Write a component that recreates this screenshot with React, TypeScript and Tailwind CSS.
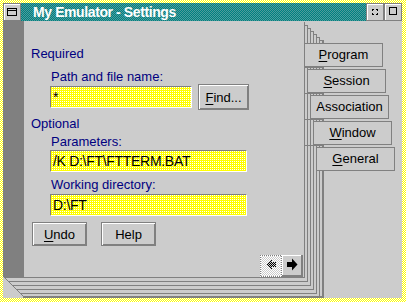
import React from "react";

const GRAY = "#808080";

function Mn({ c }: { c: string }) {
  return <span className="underline underline-offset-2">{c}</span>;
}

function PushButton({ children, className }: { children: React.ReactNode; className: string }) {
  return (
    <div
      className={`flex items-center justify-center border border-[#808080] bg-[#cccccc] text-[13px] text-black shadow-[inset_1px_1px_0_#ffffff,inset_-1px_-1px_0_#808080] ${className}`}
    >
      {children}
    </div>
  );
}

function Field({ value, w }: { value: string; w: string }) {
  return (
    <div
      className={`flex h-[22px] items-center border border-t-[#808080] border-l-[#808080] border-r-white border-b-white bg-[image:conic-gradient(#ffffff_0_25%,#ffff00_0)] bg-[length:2px_2px] pl-[2px] text-[14px] tracking-[-0.3px] text-black ${w}`}
    >
      {value}
    </div>
  );
}

function TitleButton({ kind }: { kind: "hide" | "max" }) {
  return (
    <div className="flex h-[18px] w-[18px] items-center justify-center border border-[#808080] bg-[#cccccc] shadow-[inset_1px_1px_0_#ffffff]">
      <svg width="16" height="16" shapeRendering="crispEdges">
        {kind === "hide" ? (
          <g fill="#000">
            <rect x="5" y="5" width="2" height="1" />
            <rect x="5" y="5" width="1" height="2" />
            <rect x="9" y="5" width="2" height="1" />
            <rect x="10" y="5" width="1" height="2" />
            <rect x="5" y="10" width="2" height="1" />
            <rect x="5" y="9" width="1" height="2" />
            <rect x="9" y="10" width="2" height="1" />
            <rect x="10" y="9" width="1" height="2" />
          </g>
        ) : (
          <rect x="4.5" y="3.5" width="7" height="7" fill="none" stroke="#000" strokeWidth="1.4" />
        )}
      </svg>
    </div>
  );
}

function Edges() {
  const r: React.ReactNode[] = [];
  const bottoms = [277, 281, 285, 289, 293, 296];
  for (let i = 0; i < 6; i++) {
    const x = 304 + 3 * i;
    const top = 22 + 3 * i;
    r.push(<rect key={"v" + i} x={x} y={top} width={1} height={bottoms[i] - top + 1} />);
    if (i > 0) r.push(<rect key={"s" + i} x={x - 3} y={top} width={3} height={1} />);
    if (i < 5) {
      const hx = 4 + 4 * i;
      r.push(<rect key={"h" + i} x={hx} y={bottoms[i]} width={x + 1 - hx} height={1} />);
    }
  }
  [67, 93, 119, 145].forEach((y) => r.push(<rect key={"g" + y} x={304} y={y} width={20} height={1} />));
  return (
    <svg className="absolute left-0 top-0" width="399" height="277" shapeRendering="crispEdges">
      <g transform="translate(-3 -21)" fill={GRAY}>
        {r}
        <rect x="319" y="40" width="3" height="1" />
        <rect x="322" y="40" width="2" height="258" />
        <rect x="23" y="296" width="301" height="2" />
        <line x1="4" y1="277" x2="24" y2="297" stroke={GRAY} strokeWidth="1" shapeRendering="auto" />
      </g>
    </svg>
  );
}

function BackArrow() {
  return (
    <svg width="22" height="22" shapeRendering="crispEdges">
      <defs>
        <pattern id="lite" width="2" height="2" patternUnits="userSpaceOnUse">
          <rect width="2" height="2" fill="#cccccc" />
          <rect width="1" height="1" fill="#ffffff" />
          <rect x="1" y="1" width="1" height="1" fill="#ffffff" />
        </pattern>
        <pattern id="dark" width="2" height="2" patternUnits="userSpaceOnUse">
          <rect width="1" height="1" fill="#000" />
          <rect x="1" y="1" width="1" height="1" fill="#000" />
        </pattern>
        <pattern id="edge" width="2" height="2" patternUnits="userSpaceOnUse">
          <rect width="2" height="2" fill="#ffffff" />
          <rect width="1" height="1" fill={GRAY} />
          <rect x="1" y="1" width="1" height="1" fill={GRAY} />
        </pattern>
      </defs>
      <rect width="22" height="22" fill="url(#lite)" />
      <rect width="22" height="1" fill="url(#edge)" />
      <rect width="1" height="22" fill="url(#edge)" />
      <rect x="21" width="1" height="22" fill="url(#edge)" />
      <rect y="21" width="22" height="1" fill="url(#edge)" />
      <polygon points="6,9.5 12,4 12,7 16,7 16,12 12,12 12,15" fill="url(#dark)" />
    </svg>
  );
}

function NextArrow() {
  return (
    <svg width="21" height="22" shapeRendering="crispEdges">
      <rect width="21" height="22" fill="#cccccc" />
      <rect width="21" height="1" fill="#ffffff" />
      <rect width="1" height="22" fill="#ffffff" />
      <rect x="19" width="2" height="22" fill={GRAY} />
      <rect y="20" width="21" height="2" fill={GRAY} />
      <rect x="5" y="7" width="5" height="5" fill="#000" />
      <polygon points="10,3.5 15.5,9.5 10,15.5" fill="#000" shapeRendering="auto" />
    </svg>
  );
}

const tabs = [
  { first: "P", rest: "rogram", ml: "ml-0", u: true },
  { first: "S", rest: "ession", ml: "ml-[3px]", u: true },
  { first: "A", rest: "ssociation", ml: "ml-[6px]", u: false },
  { first: "W", rest: "indow", ml: "ml-[9px]", u: true },
  { first: "G", rest: "eneral", ml: "ml-[12px]", u: true },
];

export default function App() {
  return (
    <div className="h-[302px] w-[406px] bg-[image:repeating-conic-gradient(#ffff00_0_25%,#ffffff_0_50%)] bg-[length:2px_2px] pb-[4px] pl-[3px] pr-[4px] pt-[3px] font-['Liberation_Sans',Arial,sans-serif]">
      <div className="flex h-full flex-col bg-[#cccccc]">
        <div className="flex h-[18px]">
          <div className="flex h-[18px] w-[18px] items-center justify-center border border-[#808080] bg-[#cccccc] shadow-[inset_1px_1px_0_#ffffff]">
            <svg width="10" height="8" shapeRendering="crispEdges">
              <rect x="0.5" y="0.5" width="9" height="7" fill="none" stroke="#000" />
              <rect x="1" y="2" width="8" height="1" fill="#000" />
            </svg>
          </div>
          <div className="flex flex-1 items-center bg-[image:repeating-conic-gradient(#008080_0_25%,#4f9c9c_0_50%)] bg-[length:2px_2px] pl-[12px] text-[14px] font-bold tracking-[-0.4px] text-white">
            My Emulator - Settings
          </div>
          <TitleButton kind="hide" />
          <TitleButton kind="max" />
        </div>

        <div className="relative flex-1 bg-[#cccccc]">
          <Edges />
          <div className="relative flex h-[256px]">
            <div className="w-[21px] bg-[#808080]" />
            <div className="flex w-[280px] flex-col bg-[#cccccc] pl-[7px] text-[13px] leading-[15px] text-[#000080]">
              <div className="mt-[25px]">Required</div>
              <div className="ml-[20px] mt-[8px]">Path and file name:</div>
              <div className="ml-[19px] flex h-[26px] items-center gap-[6px]">
                <Field value="*" w="w-[142px]" />
                <PushButton className="h-[26px] w-[51px]">
                  <Mn c="F" />
                  ind...
                </PushButton>
              </div>
              <div className="mt-[6px]">Optional</div>
              <div className="ml-[20px] mt-[3px]">Parameters:</div>
              <div className="ml-[19px] mt-[1px]">
                <Field value={"/K D:\\FT\\FTTERM.BAT"} w="w-[197px]" />
              </div>
              <div className="ml-[20px] mt-[5px]">Working directory:</div>
              <div className="ml-[19px] mt-[2px]">
                <Field value={"D:\\FT"} w="w-[197px]" />
              </div>
              <div className="ml-[1px] mt-[6px] flex gap-[14px]">
                <PushButton className="h-[24px] w-[55px]">
                  <Mn c="U" />
                  ndo
                </PushButton>
                <PushButton className="h-[24px] w-[55px]">Help</PushButton>
              </div>
              <div className="mr-[1px] mt-[9px] flex self-end">
                <BackArrow />
                <NextArrow />
              </div>
            </div>
            <div className="flex flex-1 flex-col gap-[2px] pt-[22px]">
              {tabs.map((t) => (
                <div
                  key={t.first}
                  className={`flex h-[24px] w-[79px] items-center justify-center border border-[#808080] bg-[#cccccc] text-[13px] text-black ${t.ml}`}
                >
                  {t.u ? <Mn c={t.first} /> : t.first}
                  {t.rest}
                </div>
              ))}
            </div>
          </div>
        </div>
      </div>
    </div>
  );
}
